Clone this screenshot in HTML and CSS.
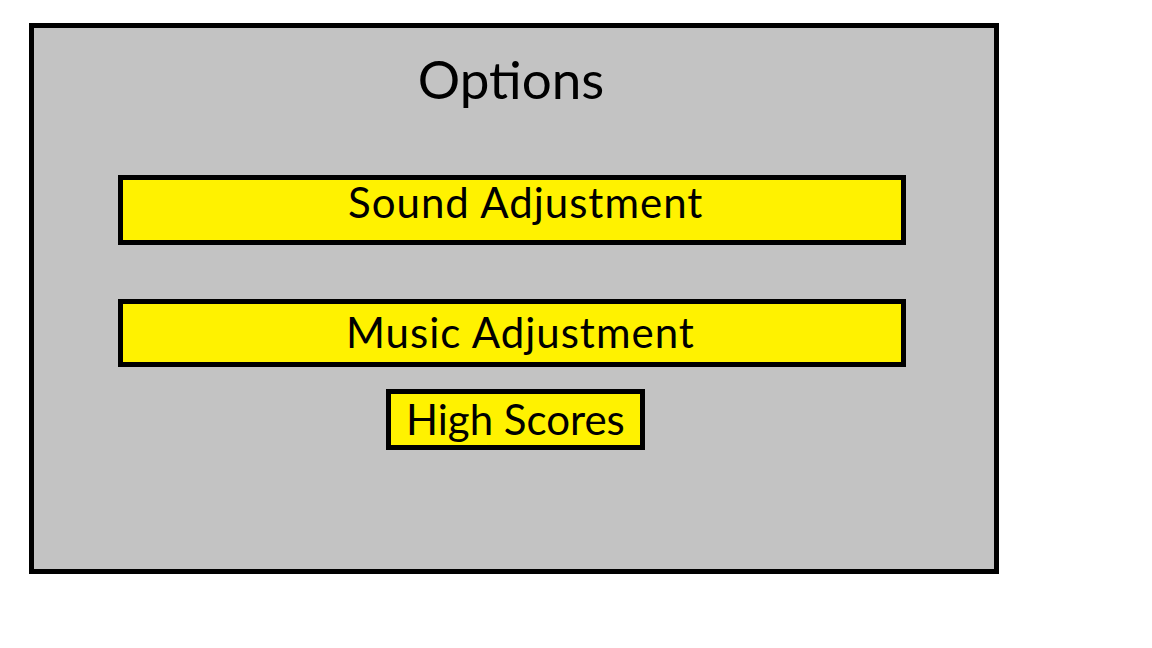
FILE: index.html
```html
<!DOCTYPE html>
<html lang="en">
<head>
    <meta charset="UTF-8">
    <meta name="viewport" content="width=device-width, initial-scale=1.0">
    <title>Options</title>
    <link rel="stylesheet" href="styles.css">
</head>
<body>
    <div class="panel">
        <h1 class="title">Options</h1>
        <div class="menu-btn sound">Sound Adjustment</div>
        <div class="menu-btn music">Music Adjustment</div>
        <div class="menu-btn scores">High Scores</div>
    </div>
</body>
</html>
```

FILE: styles.css
```css
body {
    margin: 0;
    padding: 23px 0 0 29px;
    background: #ffffff;
    font-family: Lato, "Open Sans", sans-serif;
    color: #000;
}
.panel {
    box-sizing: border-box;
    width: 970px;
    height: 551px;
    border: 5px solid #000;
    background: #c3c3c3;
    display: flex;
    flex-direction: column;
    align-items: flex-start;
}
.title {
    align-self: stretch;
    margin: 24px 6px 0 0;
    font-size: 53px;
    line-height: 53px;
    font-weight: normal;
    text-align: center;
}
.menu-btn {
    box-sizing: border-box;
    border: 5px solid #000;
    background: #fff200;
    font-size: 42px;
    line-height: 40px;
    white-space: nowrap;
}
.sound {
    margin: 70px 0 0 84px;
    width: 788px;
    height: 70px;
    padding: 2px 0 0 225px;
    letter-spacing: 1px;
}
.music {
    margin: 54px 0 0 84px;
    width: 788px;
    height: 68px;
    padding: 8px 0 0 223px;
    letter-spacing: 1px;
}
.scores {
    margin: 22px 0 0 352px;
    width: 259px;
    height: 61px;
    padding: 5px 0 0 15px;
}
```
